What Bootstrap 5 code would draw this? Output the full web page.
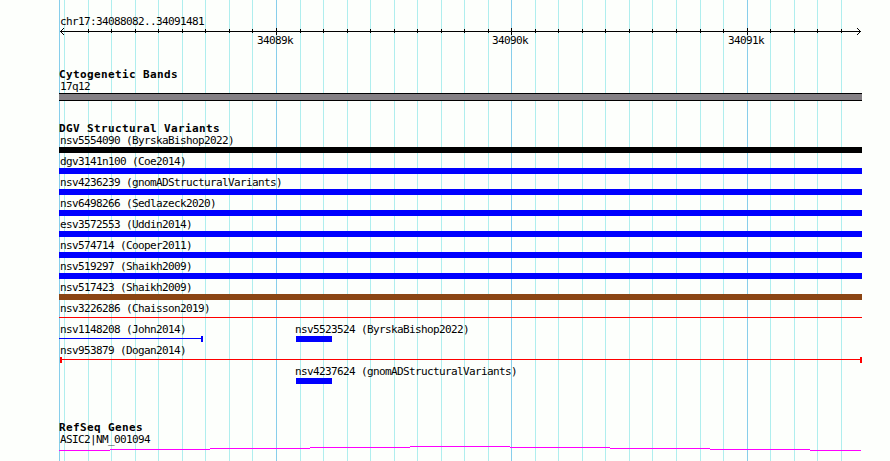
<!DOCTYPE html>
<html lang="en">
<head>
  <meta charset="UTF-8">
  <title>Genome Browser - chr17:34088082..34091481</title>
  <meta name="viewport" content="width=device-width, initial-scale=1">
  <link href="https://cdn.jsdelivr.net/npm/bootstrap@5.3.0/dist/css/bootstrap.min.css" rel="stylesheet">
  <style>
    body {
      background: #fdfffc;
      color: #000;
      font-family: 'DejaVu Sans Mono', 'Liberation Mono', monospace;
      font-size: 11px;
      line-height: 15px;
      letter-spacing: -0.622px;
    }

    .browser {
      width: 890px;
      height: 461px;
      padding: 13px 28px 0 59px;
    }

    .grid-lines {
      position: absolute;
      inset: 0;
    }

    svg {
      display: block;
      shape-rendering: crispEdges;
    }

    .feature-name {
      height: 15px;
      line-height: 17px;
      padding-left: 1px;
      white-space: pre;
    }

    .track-title {
      height: 12px;
      line-height: 14px;
      font-weight: 700;
      letter-spacing: 0.378px;
      white-space: pre;
    }

    .scale-labels {
      display: grid;
      grid-template-columns: 198px 235px 236px 1fr;
      height: 13px;
      line-height: 13px;
    }

    .scale-labels span { margin-top: -1px; }

    .track-cyto { margin-top: 20px; }
    .track-dgv { margin-top: 21px; }
    .track-refseq { margin-top: 37px; }

    .track-cyto .feature-name,
    .track-refseq .feature-name,
    #variants { margin-top: -2px; }

    .cyto-band {
      height: 8px;
      background: #848084;
      border: solid #000;
      border-width: 1px 0;
    }

    .feature-row {
      display: grid;
      grid-template-columns: 236px 1fr;
      height: 21px;
    }

    .feature-row.wide { grid-template-columns: 1fr; }
    .second { margin-left: -1px; }
    .second svg { margin-left: 2px; }
  </style>
</head>
<body>
  <div class="browser position-relative overflow-hidden">
    <svg class="grid-lines" id="grid" width="890" height="461"></svg>

    <div class="position-relative">
      <div class="feature-name">chr17:34088082..34091481</div>
      <svg id="ruler" width="803" height="7"></svg>
      <div class="scale-labels">
        <span></span><span>34089k</span><span>34090k</span><span>34091k</span>
      </div>

      <section class="track-cyto">
        <div class="track-title">Cytogenetic Bands</div>
        <div class="feature-name">17q12</div>
        <div class="cyto-band"></div>
      </section>

      <section class="track-dgv">
        <div class="track-title">DGV Structural Variants</div>
        <div id="variants"></div>
      </section>

      <section class="track-refseq">
        <div class="track-title">RefSeq Genes</div>
        <div class="feature-name">ASIC2|NM_001094</div>
        <svg id="gene" width="803" height="6"></svg>
      </section>
    </div>
  </div>

  <script src="https://cdn.jsdelivr.net/npm/bootstrap@5.3.0/dist/js/bootstrap.bundle.min.js"></script>
  <script>
    const minor = [64, 88, 111, 135, 158, 182, 205, 229, 252, 300, 323, 347, 370, 394, 417, 441, 464, 488,
      535, 558, 582, 605, 629, 652, 676, 700, 723, 770, 794, 817, 841];
    const major = [276, 511, 747];

    function rect(x, y, w, h, fill) {
      return `<rect x="${x}" y="${y}" width="${w}" height="${h}" fill="${fill}"/>`;
    }

    // vertical guides
    document.getElementById('grid').innerHTML =
      minor.map(x => rect(x, 0, 1, 461, '#afeeee')).join('') +
      [59, ...major].map(x => rect(x, 0, 1, 461, '#87ceeb')).join('');

    // ruler with an arrow head at each end
    let ruler = rect(1, 3, 801, 1, '#000');
    ruler += minor.filter(x => x > 64).map(x => rect(x - 59, 1, 1, 4, '#000')).join('');
    ruler += major.map(x => rect(x - 59, 0, 1, 7, '#000')).join('');
    for (let i = 1; i <= 3; i++) {
      ruler += rect(1 + i, 3 - i, 1, 1, '#000') + rect(1 + i, 3 + i, 1, 1, '#000');
      ruler += rect(801 - i, 3 - i, 1, 1, '#000') + rect(801 - i, 3 + i, 1, 1, '#000');
    }
    document.getElementById('ruler').innerHTML = ruler;

    const bar = color => rect(0, 0, 803, 6, color);
    const shortBar = rect(0, 0, 36, 6, '#0000ff');

    const variants = [
      { name: 'nsv5554090 (ByrskaBishop2022)', shape: bar('#000') },
      { name: 'dgv3141n100 (Coe2014)', shape: bar('#0000ff') },
      { name: 'nsv4236239 (gnomADStructuralVariants)', shape: bar('#0000ff') },
      { name: 'nsv6498266 (Sedlazeck2020)', shape: bar('#0000ff') },
      { name: 'esv3572553 (Uddin2014)', shape: bar('#0000ff') },
      { name: 'nsv574714 (Cooper2011)', shape: bar('#0000ff') },
      { name: 'nsv519297 (Shaikh2009)', shape: bar('#0000ff') },
      { name: 'nsv517423 (Shaikh2009)', shape: bar('#8b4513') },
      { name: 'nsv3226286 (Chaisson2019)', shape: rect(0, 2, 803, 1, '#ff0000') },
      { name: 'nsv1148208 (John2014)', shape: rect(0, 2, 143, 1, '#0000ff') + rect(142, 0, 2, 6, '#0000ff'),
        second: 'nsv5523524 (ByrskaBishop2022)' },
      { name: 'nsv953879 (Dogan2014)', shape: rect(1, 2, 801, 1, '#ff0000') + rect(1, 0, 2, 6, '#ff0000') + rect(801, 0, 2, 6, '#ff0000') },
      { name: '', shape: '', second: 'nsv4237624 (gnomADStructuralVariants)' }
    ];

    document.getElementById('variants').innerHTML = variants.map(v => `
      <div class="feature-row ${v.second ? '' : 'wide'}">
        <div>
          <div class="feature-name">${v.name}</div>
          <svg width="${v.second ? 236 : 803}" height="6">${v.shape}</svg>
        </div>
        ${v.second ? `<div class="second">
          <div class="feature-name">${v.second}</div>
          <svg width="36" height="6">${shortBar}</svg>
        </div>` : ''}
      </div>`).join('');

    // intron arc, one pixel step every 100px
    const steps = [[0, 51, 4], [51, 100, 3], [151, 100, 2], [251, 100, 1], [351, 100, 0],
      [451, 100, 1], [551, 100, 2], [651, 100, 3], [751, 51, 4]];
    document.getElementById('gene').innerHTML =
      steps.map(([x, w, y]) => rect(x, y, w, 1, '#ff00ff')).join('');
  </script>
</body>
</html>
